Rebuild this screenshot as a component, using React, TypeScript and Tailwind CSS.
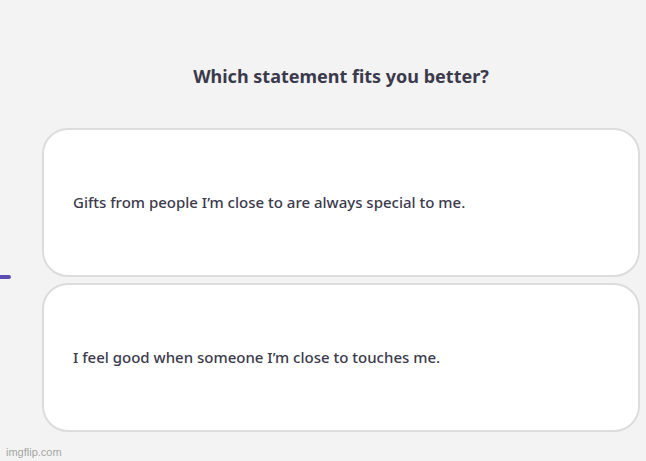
export default function App() {
  const options = [
    "Gifts from people I’m close to are always special to me.",
    "I feel good when someone I’m close to touches me.",
  ];
  return (
    <div
      className="relative h-[461px] w-[646px] overflow-hidden bg-[#f3f3f3]"
      style={{ fontFamily: '"Noto Sans", "Open Sans", sans-serif' }}
    >
      <div className="pl-[42px] pr-[6px] pt-[62px]">
        <h1 className="text-center text-[18px] font-bold text-[#3b3a4c] leading-[28px]">
          Which statement fits you better?
        </h1>
        <div className="mt-[38px] flex flex-col gap-[6px]">
          {options.map((o) => (
            <button
              key={o}
              className="flex h-[149px] w-full items-center rounded-[26px] border-2 border-[#dcdcdc] bg-white px-[29px] text-left text-[15px] font-medium text-[#3b3a4c]"
            >
              {o}
            </button>
          ))}
        </div>
      </div>
      <div className="absolute left-0 top-[275px] h-[4px] w-[11px] rounded-r bg-[#5b4db3]" />
      <div
        className="absolute left-[6px] top-[444px] text-[11px] text-[#a5a5a5]"
        style={{ fontFamily: '"Liberation Sans", Arial, sans-serif' }}
      >
        imgflip.com
      </div>
    </div>
  );
}
